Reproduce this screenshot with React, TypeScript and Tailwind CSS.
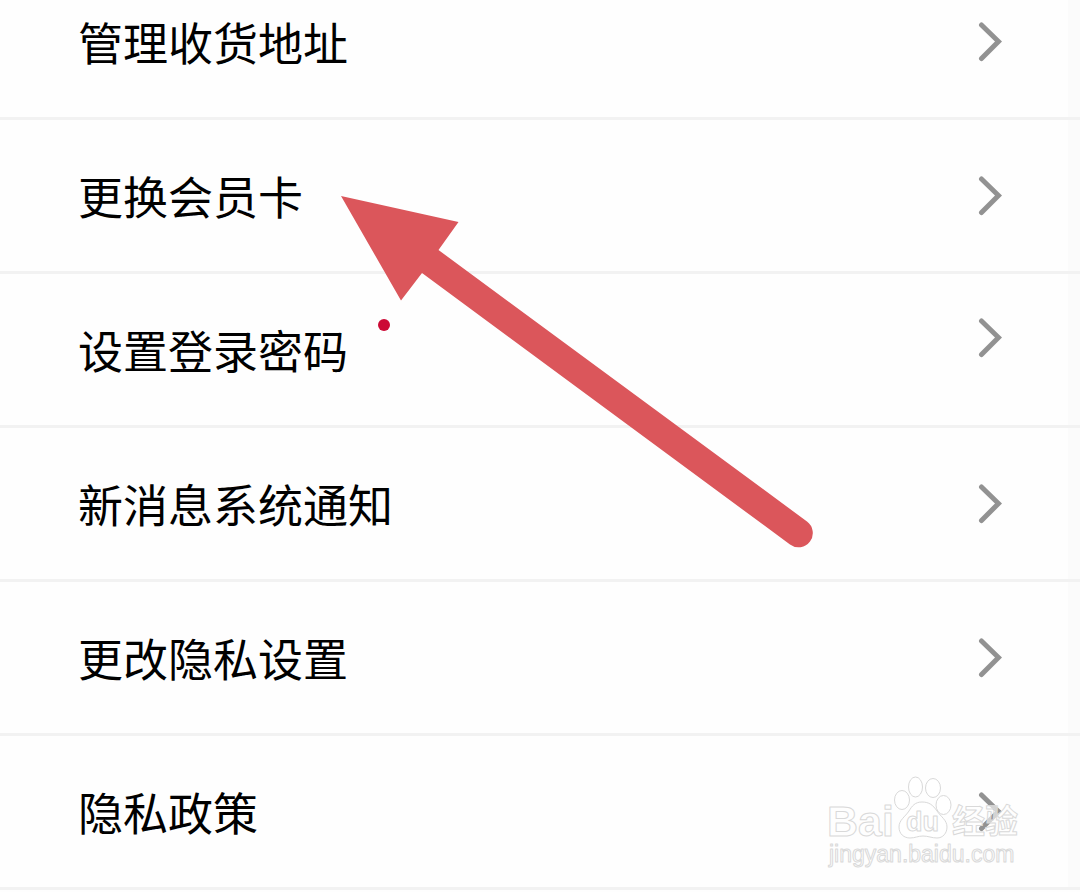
type Setting = {
  label: string;
  raised?: boolean;
};

const settings: Setting[] = [
  { label: "管理收货地址" },
  { label: "更换会员卡" },
  { label: "设置登录密码", raised: true },
  { label: "新消息系统通知" },
  { label: "更改隐私设置" },
  { label: "隐私政策" },
];

function Chevron({ className }: { className?: string }) {
  return (
    <svg
      width="24"
      height="40"
      viewBox="0 0 24 40"
      fill="none"
      stroke="#929292"
      strokeWidth="5"
      strokeLinecap="round"
      className={className}
      aria-hidden="true"
    >
      <path d="M3.500 3 20.500 19.500 3.500 36.500" />
    </svg>
  );
}

function SettingRow({ label, raised }: Setting) {
  return (
    <li className="border-b-3 border-[#f2f2f2] bg-[#fbfbfb]">
      <div className="mr-3 bg-[#fefefe]">
        <button
          type="button"
          className="flex h-[151px] w-full items-center justify-between pr-[66px] pl-[78px] text-left"
        >
          <span className="text-[45px] leading-[60px] text-black">{label}</span>
          <Chevron className={raised ? "mb-6" : undefined} />
        </button>
      </div>
    </li>
  );
}

function Pointer() {
  return (
    <svg
      width="480"
      height="360"
      viewBox="340 194 480 360"
      className="pointer-events-none absolute top-[194px] left-[340px]"
      aria-hidden="true"
    >
      <path
        fill="#db565b"
        d="M341 196 458.5 222 438.5 250 807 521.5A14.3 14.3 0 0 1 790 544.5L422 273 401 300.5Z"
      />
      <circle cx="384" cy="325" r="6" fill="#cc0a35" />
    </svg>
  );
}

function Watermark() {
  return (
    <svg
      width="200"
      height="100"
      viewBox="825 772 200 100"
      className="pointer-events-none absolute right-[55px] bottom-[20px]"
      fill="#ffffff"
      fillOpacity="0.6"
      stroke="#d9d9d9"
      strokeWidth="1"
      strokeLinejoin="round"
    >
      <text x="827" y="836" fontSize="43" fontWeight="700" className="font-['Liberation_Sans',sans-serif]">
        Bai
      </text>
      <ellipse cx="902" cy="800" rx="7.5" ry="9.5" />
      <ellipse cx="915.5" cy="787" rx="7" ry="10" />
      <ellipse cx="933" cy="788" rx="7.5" ry="9.5" />
      <ellipse cx="943.5" cy="805" rx="7.5" ry="9.5" />
      <path d="M922 802C915 802 912 806 909 811C905 817 899 820 899 827C899 834 904 838 910 838C915 838 918 836 923 836C928 836 932 838 937 838C943 838 947 833 947 827C947 820 941 817 937 811C933 805 929 802 922 802Z" />
      <text x="906" y="831" fontSize="27" fontWeight="700" className="font-['Liberation_Sans',sans-serif]">
        du
      </text>
      <text
        x="952"
        y="833"
        fontSize="33"
        fontWeight="700"
        className="font-['Noto_Sans_CJK_SC',sans-serif]"
      >
        经验
      </text>
      <text x="829" y="862" fontSize="23" className="font-['Liberation_Sans',sans-serif]">
        jingyan.baidu.com
      </text>
    </svg>
  );
}

export default function App() {
  return (
    <main className="relative overflow-hidden bg-[#fefefe] pb-0.5 font-['Noto_Sans_CJK_SC',sans-serif]">
      <ul className="-mt-[34px]">
        {settings.map((setting) => (
          <SettingRow key={setting.label} {...setting} />
        ))}
      </ul>
      <Pointer />
      <Watermark />
    </main>
  );
}
